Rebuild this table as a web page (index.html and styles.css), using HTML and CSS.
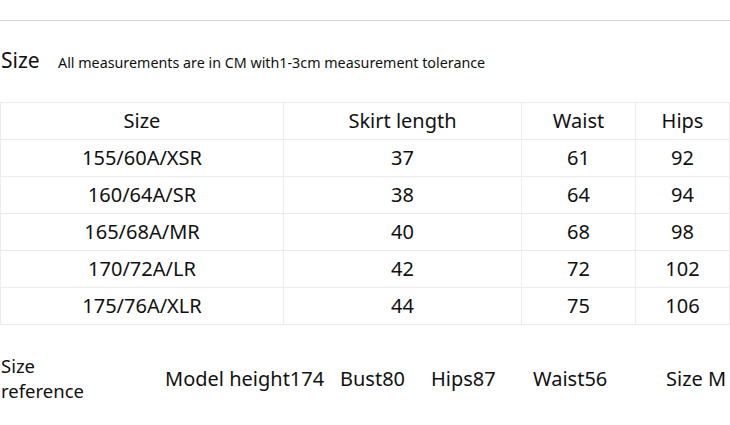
FILE: index.html
```html
<!DOCTYPE html>
<html>
<head>
<meta charset="utf-8">
<link rel="stylesheet" href="styles.css">
</head>
<body>
<div class="page">
  <div class="rule"></div>
  <div class="title-row">
    <span class="title">Size</span>
    <span class="note">All measurements are in CM with1-3cm measurement tolerance</span>
  </div>
  <table class="chart">
    <colgroup>
      <col class="c1"><col class="c2"><col class="c3"><col class="c4">
    </colgroup>
    <tr><td>Size</td><td>Skirt length</td><td>Waist</td><td>Hips</td></tr>
    <tr><td>155/60A/XSR</td><td>37</td><td>61</td><td>92</td></tr>
    <tr><td>160/64A/SR</td><td>38</td><td>64</td><td>94</td></tr>
    <tr><td>165/68A/MR</td><td>40</td><td>68</td><td>98</td></tr>
    <tr><td>170/72A/LR</td><td>42</td><td>72</td><td>102</td></tr>
    <tr><td>175/76A/XLR</td><td>44</td><td>75</td><td>106</td></tr>
  </table>
  <div class="ref">
    <div class="ref-label"><div>Size</div><div>reference</div></div>
    <div>Model height174</div>
    <div>Bust80</div>
    <div>Hips87</div>
    <div>Waist56</div>
    <div>Size M</div>
  </div>
</div>
</body>
</html>
```
FILE: styles.css
```css
html, body {
  margin: 0;
  padding: 0;
  background: #fff;
}
body {
  width: 730px;
  height: 425px;
  overflow: hidden;
  font-family: "Noto Sans", "Open Sans", sans-serif;
  color: #111;
}
.rule {
  margin-top: 20px;
  border-top: 1px solid #d6d6d6;
}
.title-row {
  display: flex;
  align-items: baseline;
  height: 81px;
  box-sizing: border-box;
}
.title {
  font-size: 21px;
  line-height: 1;
  padding-left: 1px;
  margin-top: 29px;
  width: 57px;
}
.note {
  font-size: 14.3px;
  line-height: 1;
}
.chart {
  border-collapse: collapse;
  width: 729px;
  table-layout: fixed;
}
.chart .c1 { width: 283px; }
.chart .c2 { width: 238px; }
.chart .c3 { width: 114px; }
.chart .c4 { width: 94px; }
.chart td {
  border: 1px solid #ececec;
  height: 36px;
  padding: 0;
  text-align: center;
  font-size: 20px;
  line-height: 36px;
}
.ref {
  display: grid;
  grid-template-columns: 165px 175px 91px 102px 133px 64px;
  align-items: center;
  font-size: 20px;
  margin-top: 28px;
  white-space: nowrap;
}
.ref-label {
  font-size: 18.5px;
  line-height: 25px;
  padding-left: 1px;
}
```
